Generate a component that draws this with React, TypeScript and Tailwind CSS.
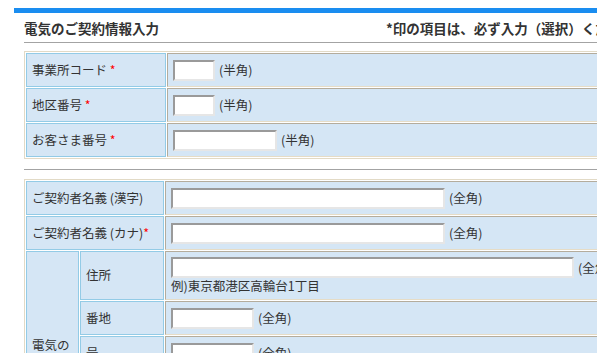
import React from 'react';

const labelCell =
  'bg-[#d5e6f5] border border-[#93cbe6] px-[5px] py-0 text-left align-middle font-normal';
const valueCell =
  'bg-[#d5e6f5] border border-t-[#b4ac9c] border-l-[#b4ac9c] border-b-[#e6dcc6] border-r-[#e6dcc6] px-[5px] py-0 text-left align-middle';
const tableCls =
  'border-separate border-spacing-[1px] border border-[#e2dac6] w-[700px] text-[12.5px] text-[#333]';

function Req() {
  return <span className="text-[#ff0000]">*</span>;
}

function Field({ w }: { w: string }) {
  return (
    <input
      type="text"
      className={`${w} h-[21px] border-2 border-t-[#9a9a9a] border-l-[#9a9a9a] border-b-[#e6e6e6] border-r-[#e6e6e6] bg-white align-middle outline-none`}
    />
  );
}

function Note({ children }: { children: React.ReactNode }) {
  return <span className="ml-[4px] align-middle">{children}</span>;
}

export default function App() {
  return (
    <div className="w-[597px] h-[353px] overflow-hidden bg-white font-['Noto_Sans_CJK_JP',sans-serif]">
      <div className="w-[720px] pt-[8px] pl-[14px]">
        <div className="h-[5px] bg-[#1a8df0]" />
        <div className="pl-[10px]">
          <h2 className="mt-[6px] pb-[5px] border-b border-[#a3a3a3] text-[13.5px] leading-[18px] font-bold text-[#333] whitespace-nowrap">
            <span className="inline-block w-[362px]">電気のご契約情報入力</span>
            <span>*印の項目は、必ず入力（選択）ください。</span>
          </h2>

          <table className={`${tableCls} mt-[8px]`}>
            <tbody>
              <tr>
                <th className={`${labelCell} w-[140px] h-[34px]`}>
                  事業所コード <Req />
                </th>
                <td className={valueCell}>
                  <Field w="w-[42px]" />
                  <Note>(半角)</Note>
                </td>
              </tr>
              <tr>
                <th className={`${labelCell} h-[34px]`}>
                  地区番号 <Req />
                </th>
                <td className={valueCell}>
                  <Field w="w-[42px]" />
                  <Note>(半角)</Note>
                </td>
              </tr>
              <tr>
                <th className={`${labelCell} h-[34px]`}>
                  お客さま番号 <Req />
                </th>
                <td className={valueCell}>
                  <Field w="w-[104px]" />
                  <Note>(半角)</Note>
                </td>
              </tr>
            </tbody>
          </table>

          <div className="mt-[10px] border-t border-[#a3a3a3]" />

          <table className={`${tableCls} mt-[9px]`}>
            <tbody>
              <tr>
                <th colSpan={2} className={`${labelCell} h-[34px]`}>
                  ご契約者名義 (漢字)
                </th>
                <td className={valueCell}>
                  <Field w="w-[274px]" />
                  <Note>(全角)</Note>
                </td>
              </tr>
              <tr>
                <th colSpan={2} className={`${labelCell} h-[34px]`}>
                  ご契約者名義 (カナ)<Req />
                </th>
                <td className={valueCell}>
                  <Field w="w-[274px]" />
                  <Note>(全角)</Note>
                </td>
              </tr>
              <tr>
                <th rowSpan={6} className={`${labelCell} w-[53px] leading-[18px]`}>
                  電気の
                  <br />
                  ご使用
                  <br />
                  場所
                </th>
                <th className={`${labelCell} w-[84px] h-[49px]`}>住所</th>
                <td className={`${valueCell} leading-[16px]`}>
                  <div className="whitespace-nowrap">
                    <Field w="w-[403px]" />
                    <Note>(全角)</Note>
                  </div>
                  <div>例)東京都港区高輪台1丁目</div>
                </td>
              </tr>
              <tr>
                <th className={`${labelCell} h-[34px]`}>番地</th>
                <td className={valueCell}>
                  <Field w="w-[83px]" />
                  <Note>(全角)</Note>
                </td>
              </tr>
              <tr>
                <th className={`${labelCell} h-[34px]`}>号</th>
                <td className={valueCell}>
                  <Field w="w-[83px]" />
                  <Note>(全角)</Note>
                </td>
              </tr>
              <tr>
                <th className={`${labelCell} h-[34px]`}>建物名</th>
                <td className={valueCell}>
                  <Field w="w-[274px]" />
                  <Note>(全角)</Note>
                </td>
              </tr>
              <tr>
                <th className={`${labelCell} h-[34px]`}>部屋番号</th>
                <td className={valueCell}>
                  <Field w="w-[83px]" />
                  <Note>(全角)</Note>
                </td>
              </tr>
              <tr>
                <th className={`${labelCell} h-[34px]`}>電話番号</th>
                <td className={valueCell}>
                  <Field w="w-[104px]" />
                  <Note>(半角)</Note>
                </td>
              </tr>
            </tbody>
          </table>
        </div>
      </div>
    </div>
  );
}
